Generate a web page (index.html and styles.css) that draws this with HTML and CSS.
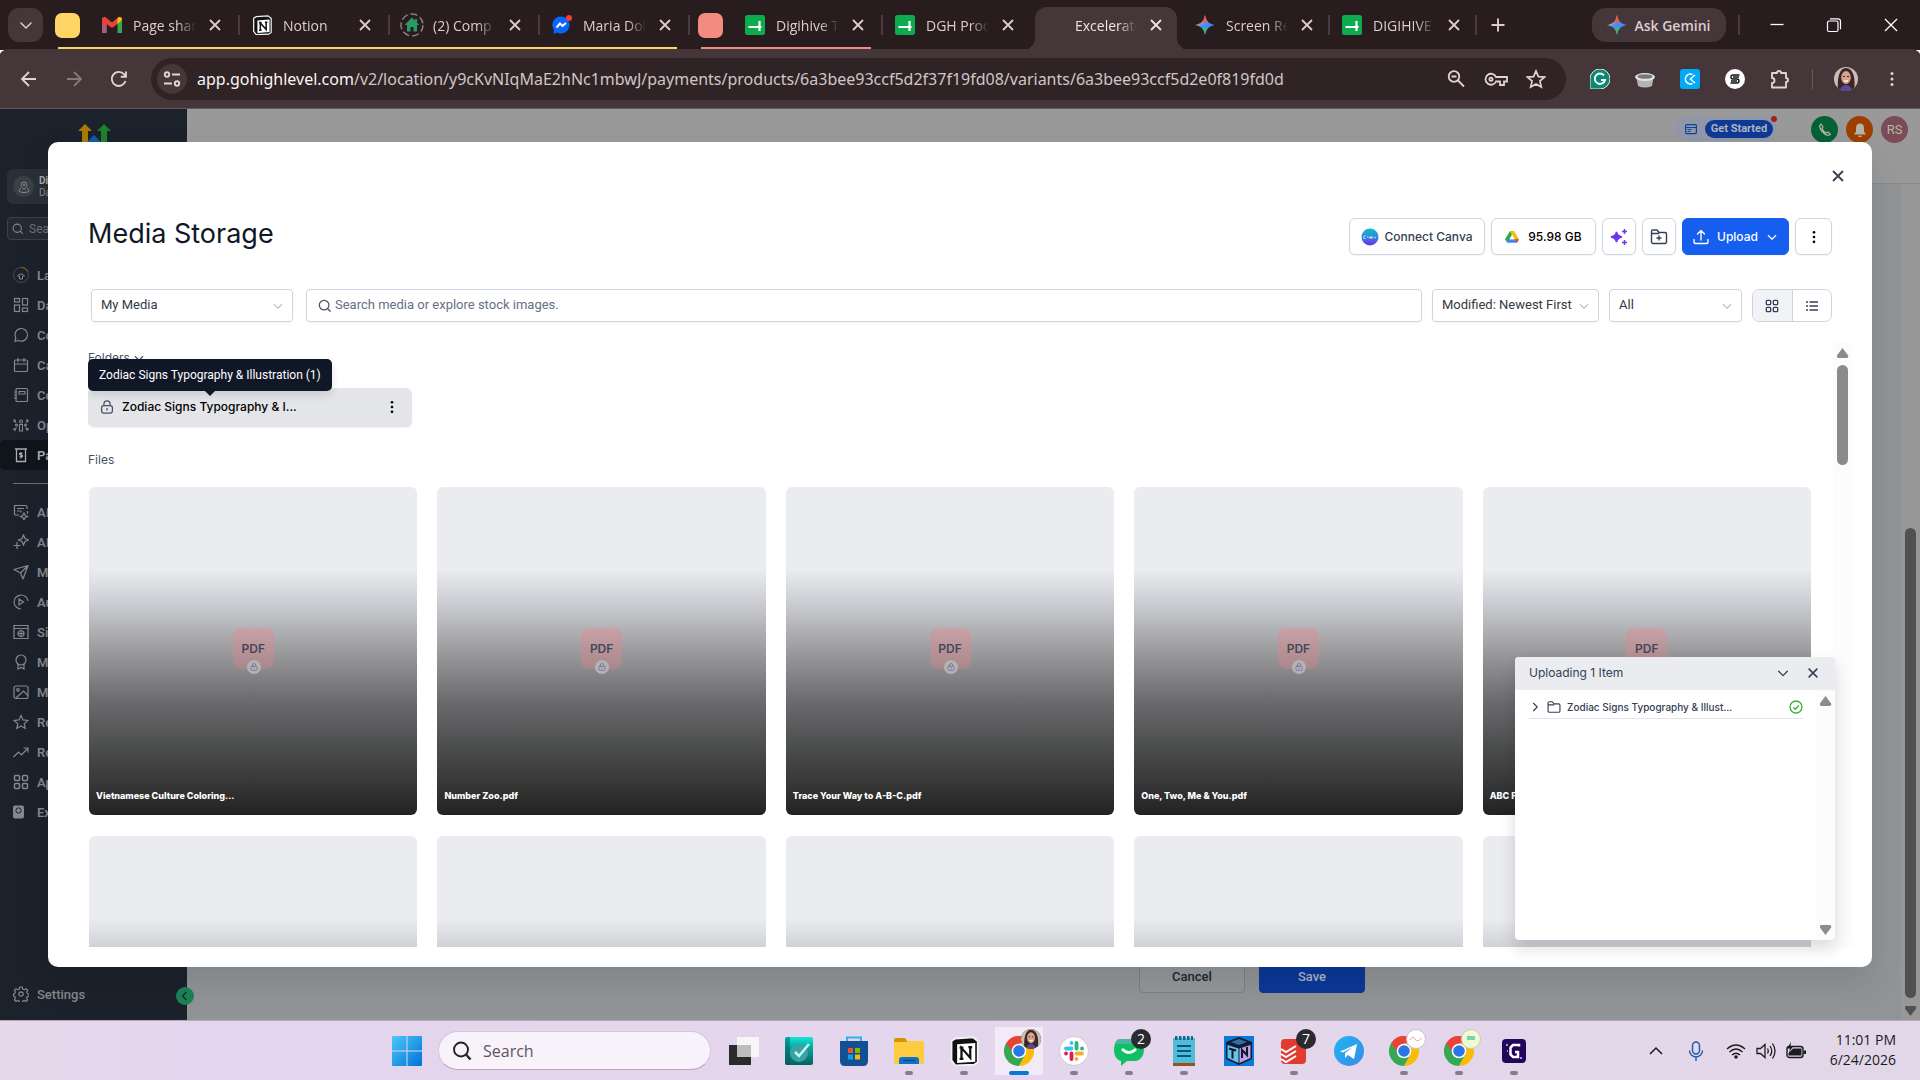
FILE: index.html
```html
<!DOCTYPE html>
<html lang="en">
<head>
<meta charset="utf-8">
<title>Excelerator</title>
<link rel="stylesheet" href="styles.css">
</head>
<body>
<svg class="defs" aria-hidden="true">
  <defs>
    <linearGradient id="gem" x1="0" y1="0" x2="1" y2="1"><stop offset="0.2" stop-color="#f5b73c"/><stop offset="0.45" stop-color="#4b8df8"/><stop offset="1" stop-color="#2e7df6"/></linearGradient>
    <linearGradient id="win" x1="0" y1="0" x2="1" y2="1"><stop offset="0" stop-color="#4cc8fb"/><stop offset="1" stop-color="#0072d4"/></linearGradient>
    <linearGradient id="canva" x1="0" y1="0" x2="0" y2="1"><stop offset="0" stop-color="#05c0cb"/><stop offset="0.5" stop-color="#3489dc"/><stop offset="1" stop-color="#7325f0"/></linearGradient>
    <linearGradient id="sec" x1="0" y1="0" x2="0" y2="1"><stop offset="0" stop-color="#0de8d8"/><stop offset="0.4" stop-color="#07a39b"/><stop offset="1" stop-color="#05625f"/></linearGradient>
    <linearGradient id="tg" x1="0" y1="0" x2="1" y2="1"><stop offset="0" stop-color="#1fb5f2"/><stop offset="1" stop-color="#3a8ae8"/></linearGradient>
  </defs>
  <symbol id="x" viewBox="0 0 16 16"><path d="M3 3l10 10M13 3L3 13" fill="none" stroke="currentColor" stroke-width="1.8"/></symbol>
  <symbol id="down" viewBox="0 0 16 16"><path d="M3 6l5 5 5-5" fill="none" stroke="currentColor" stroke-width="1.5" stroke-linecap="round" stroke-linejoin="round"/></symbol>
  <symbol id="kebab" viewBox="0 0 16 16"><g fill="currentColor"><circle cx="8" cy="2.5" r="1.5"/><circle cx="8" cy="8" r="1.5"/><circle cx="8" cy="13.5" r="1.5"/></g></symbol>
  <symbol id="lock" viewBox="0 0 16 16"><g fill="none" stroke="currentColor" stroke-width="1.4" stroke-linecap="round"><rect x="1.8" y="6.3" width="12.4" height="8.7" rx="2.6"/><path d="M4.5 6V4.5a3.5 3.5 0 0 1 7 0V6M8 9.5v2"/></g></symbol>
  <symbol id="sheets" viewBox="0 0 20 20"><rect width="20" height="20" rx="2.5" fill="#0cac4e"/><path d="M3.500 12h13M14.500 6v10" stroke="#fff" stroke-width="2.200" fill="none"/></symbol>
  <symbol id="gemini" viewBox="0 0 20 20"><path d="M10 0c1 6 4 9 10 10-6 1-9 4-10 10C9 14 6 11 0 10 6 9 9 6 10 0z" fill="url(#gem)"/><path d="M10 0c.5 3 1.500 5.200 3 6.800L10 8 7 6.800C8.500 5.200 9.500 3 10 0z" fill="#ec5a50"/><path d="M10 20c.5-3 1.500-5.200 3-6.800L10 12l-3 1.200c1.500 1.600 2.500 3.800 3 6.800z" fill="#3cb371"/></symbol>
  <symbol id="folder" viewBox="0 0 16 16"><path d="M1.200 12.500v-9A1.500 1.500 0 0 1 2.700 2H6l2 2.400h5.300a1.500 1.500 0 0 1 1.500 1.500v6.600a1.500 1.500 0 0 1-1.500 1.500H2.700a1.500 1.500 0 0 1-1.500-1.500zM1.200 5.500h7" fill="none" stroke="currentColor" stroke-width="1.300" stroke-linejoin="round"/></symbol>
  <symbol id="grid" viewBox="0 0 16 16"><g fill="none" stroke="currentColor" stroke-width="1.500"><rect x="1.500" y="1.500" width="5" height="5" rx="1"/><rect x="9.500" y="1.500" width="5" height="5" rx="1"/><rect x="1.500" y="9.500" width="5" height="5" rx="1"/><rect x="9.500" y="9.500" width="5" height="5" rx="1"/></g></symbol>
  <symbol id="search" viewBox="0 0 16 16"><g fill="none" stroke="currentColor" stroke-width="1.400" stroke-linecap="round"><circle cx="7" cy="7" r="5.500"/><path d="M11.200 11.200L14 14"/></g></symbol>
  <symbol id="chrome" viewBox="0 0 30 30"><path d="M2 7.500A15 15 0 0 1 28 7.500H15z" fill="#ea4335"/><path d="M2 7.500A15 15 0 0 0 15 30l6.500-11.200L15 15z" fill="#34a853"/><path d="M15 30A15 15 0 0 0 28 7.500H15l6.500 11.300z" fill="#fbbc05"/><path d="M2 7.500L8.500 18.800 15 15V7.500z" fill="#34a853"/><path d="M2 7.500Q8 0 15 0V15H8z" fill="#ea4335"/><circle cx="15" cy="15" r="7.300" fill="#fff"/><circle cx="15" cy="15" r="5.800" fill="#2b76e5"/></symbol>
  <symbol id="face" viewBox="0 0 24 24"><clipPath id="fc"><circle cx="12" cy="12" r="12"/></clipPath><g clip-path="url(#fc)"><rect width="24" height="24" fill="#cbbdb6"/><path d="M4 24C3 12 5 1 12 1s10 10 8 23z" fill="#3d2627"/><ellipse cx="12" cy="10.500" rx="4.800" ry="6.500" fill="#d9a38d"/><path d="M6 24c0-4 4-6 6-6s6 2 6 6z" fill="#5a4a96"/><path d="M10 13.500q2 1.500 4 0" stroke="#fff" stroke-width="1.200" fill="none"/><path d="M9 9.500h2M13 9.500h2" stroke="#3d2627"/></g></symbol>
  <symbol id="n" viewBox="0 0 24 24"><path d="M2 4l3-2 14-1 4 3v17l-3 2-15 .5-3-4z" fill="#111" stroke="#f2f2f2" stroke-width="1.500"/><path d="M6.500 6.500L21 5.500v15l-14.500 1z" fill="#fff"/><path d="M10 18V9.500l7 8V8.500M8.500 9.300h3M15.500 8.800h3M8.500 18.300h3" fill="none" stroke="#111" stroke-width="1.800"/></symbol>
</svg>

<header class="tabstrip">
  <button class="tab-search" aria-label="Search tabs"><svg class="i16"><use href="#down"/></svg></button>
  <button class="group yellow" aria-label="Tab group"></button>
  <nav class="tabs tabs-yellow">
    <div class="tab"><svg class="i20" viewBox="0 0 20 20"><path d="M0 3.500V18h4.500V8z" fill="#4285f4"/><path d="M0 3.500Q1.500.5 4 2.500l6 5 6-5q3-2 4 1.500L15.500 9 10 13 4.500 9v9H0z" fill="#ea4335"/><path d="M15.500 18V5L20 3.500V18z" fill="#34a853"/><path d="M15.500 3l2-1q2.500 0 2.500 3l-4.500 4z" fill="#fbbc04"/><path d="M0 9l4.500 1v8H1q-1 0-1-1z" fill="#4285f4" opacity=".35"/></svg><a href="#">Page shar</a><button aria-label="Close tab"><svg class="i16"><use href="#x"/></svg></button></div>
    <div class="tab"><svg class="i20"><use href="#n"/></svg><a href="#">Notion</a><button aria-label="Close tab"><svg class="i16"><use href="#x"/></svg></button></div>
    <div class="tab big"><svg class="i24" viewBox="0 0 24 24"><circle cx="12" cy="12" r="11" fill="none" stroke="#8b7f81" stroke-width="1.500" stroke-dasharray="7 3"/><path d="M12 4.500L4.500 12H7v6.500h3.500V14h3v4.500H17V12h2.500L17 9.500V6h-2v1.500z" fill="#279b62"/></svg><a href="#">(2) Comp</a><button aria-label="Close tab"><svg class="i16"><use href="#x"/></svg></button></div>
    <div class="tab"><svg class="i20" viewBox="0 0 20 20"><path d="M9 1.500a8.500 8.500 0 1 1-4 16L1.500 19l.5-4A8.500 8.500 0 0 1 9 1.500z" fill="#0866ff"/><path d="M4.500 12.500L8 8.500l2.500 2.500L14 8" fill="none" stroke="#fff" stroke-width="2"/><circle cx="17" cy="3" r="3" fill="#fb3b30"/></svg><a href="#">Maria Dol</a><button aria-label="Close tab"><svg class="i16"><use href="#x"/></svg></button></div>
  </nav>
  <button class="group pink" aria-label="Tab group"></button>
  <nav class="tabs tabs-pink">
    <div class="tab"><svg class="i20"><use href="#sheets"/></svg><a href="#">Digihive Te</a><button aria-label="Close tab"><svg class="i16"><use href="#x"/></svg></button></div>
    <div class="tab plain"><svg class="i20"><use href="#sheets"/></svg><a href="#">DGH Proc</a><button aria-label="Close tab"><svg class="i16"><use href="#x"/></svg></button></div>
  </nav>
  <nav class="tabs tabs-loose">
    <div class="tab active"><a href="#">Excelerato</a><button aria-label="Close tab"><svg class="i16"><use href="#x"/></svg></button></div>
    <div class="tab"><svg class="i20"><use href="#gemini"/></svg><a href="#">Screen Re</a><button aria-label="Close tab"><svg class="i16"><use href="#x"/></svg></button></div>
    <div class="tab"><svg class="i20"><use href="#sheets"/></svg><a href="#">DIGIHIVE</a><button aria-label="Close tab"><svg class="i16"><use href="#x"/></svg></button></div>
  </nav>
  <button class="new-tab" aria-label="New tab"><svg class="i16" viewBox="0 0 16 16"><path d="M8 1.500v13M1.500 8h13" stroke="currentColor" stroke-width="1.900"/></svg></button>
  <button class="ask"><svg class="i20"><use href="#gemini"/></svg>Ask Gemini</button>
  <div class="win-controls">
    <button aria-label="Minimize"><svg class="i16" viewBox="0 0 16 16"><path d="M1.500 7.500h13" stroke="currentColor" stroke-width="1.300"/></svg></button>
    <button aria-label="Restore"><svg class="i16" viewBox="0 0 16 16"><g fill="none" stroke="currentColor" stroke-width="1.200"><rect x="1.500" y="4" width="10.500" height="10.500" rx="1.500"/><path d="M4 1.800h8a2.500 2.500 0 0 1 2.500 2.500v8"/></g></svg></button>
    <button aria-label="Close window"><svg class="i16" viewBox="0 0 16 16"><path d="M2 2l12 12M14 2L2 14" stroke="currentColor" stroke-width="1.300"/></svg></button>
  </div>
</header>

<div class="toolbar">
  <button aria-label="Back"><svg class="i20" viewBox="0 0 20 20"><path d="M17 10H3M10 3l-7 7 7 7" fill="none" stroke="currentColor" stroke-width="1.800"/></svg></button>
  <button class="faded" aria-label="Forward"><svg class="i20" viewBox="0 0 20 20"><path d="M3 10h14M10 3l7 7-7 7" fill="none" stroke="currentColor" stroke-width="1.800"/></svg></button>
  <button aria-label="Reload"><svg class="i20" viewBox="0 0 20 20"><path d="M16.500 12A7 7 0 1 1 15 5.200L17 7.500M17 2.500v5.200h-5.200" fill="none" stroke="currentColor" stroke-width="1.900"/></svg></button>
  <div class="omnibox">
    <button class="site" aria-label="Site information"><svg class="i20" viewBox="0 0 20 20"><g fill="none" stroke="currentColor" stroke-width="1.900"><circle cx="5" cy="5.500" r="2.200"/><path d="M10 5.500h8M2 14.500h8"/><circle cx="15" cy="14.500" r="2.200"/></g></svg></button>
    <p class="url"><b>app.gohighlevel.com</b>/v2/location/y9cKvNIqMaE2hNc1mbwJ/payments/products/6a3bee93ccf5d2f37f19fd08/variants/6a3bee93ccf5d2e0f819fd0d</p>
    <div class="omni-actions">
      <button aria-label="Zoom"><svg class="i20" viewBox="0 0 20 20"><g fill="none" stroke="currentColor" stroke-width="1.800"><circle cx="8" cy="7.500" r="5.300"/><path d="M12 11.500l6 6M5.500 7.500h5"/></g></svg></button>
      <button aria-label="Passwords"><svg class="i24" viewBox="0 0 24 20"><g fill="none" stroke="currentColor" stroke-width="1.800"><path d="M12 8a5.500 5.500 0 1 0 0 4.500h4V16h4v-3.500h3V8z"/><circle cx="7" cy="10.200" r="1.600"/></g></svg></button>
      <button aria-label="Bookmark"><svg class="i20" viewBox="0 0 20 20"><path d="M10 2l2.400 5.600 6.100.5-4.600 4 1.400 6L10 14.900l-5.300 3.200 1.400-6-4.600-4 6.100-.5z" fill="none" stroke="currentColor" stroke-width="1.700"/></svg></button>
    </div>
  </div>
  <div class="extensions">
    <button aria-label="Grammarly"><svg class="i20" viewBox="0 0 20 20"><path d="M0 20V10A10 10 0 1 1 10 20z" fill="#0b8a70" stroke="#dfe9e5" stroke-width="1"/><path d="M14 6.500A5.200 5.200 0 1 0 15 11h-4" fill="none" stroke="#fff" stroke-width="1.900"/></svg></button>
    <button aria-label="Storage"><svg class="i20" viewBox="0 0 20 20"><path d="M1.500 9h17l-1.500 8q-7 3-14 0z" fill="#b4b4b4"/><ellipse cx="10" cy="8" rx="10" ry="4" fill="#e4e4e4"/><ellipse cx="10" cy="7.500" rx="7.500" ry="2.300" fill="#777"/></svg></button>
    <button aria-label="Clockify"><svg class="i20" viewBox="0 0 20 20"><rect width="20" height="20" rx="3" fill="#03a9f4"/><path d="M12.500 5.500a5 5 0 1 0 0 9M15 6l-4.500 4L15 14" fill="none" stroke="#fff" stroke-width="1.500"/></svg></button>
    <button aria-label="Scribe"><svg class="i20" viewBox="0 0 20 20"><circle cx="10" cy="10" r="10" fill="#fff"/><path d="M14.500 6H8a2 2 0 0 0 0 4h4a2 2 0 0 1 0 4H5.500M8 8h6M6 12h6" fill="none" stroke="#111" stroke-width="1.400"/></svg></button>
    <button aria-label="Extensions"><svg class="i20" viewBox="0 0 20 20"><path d="M2 4h5a2 2 0 0 1 4 0h5v5a2 2 0 0 1 0 4v5.500H2V14a2.500 2.500 0 0 0 0-5z" fill="none" stroke="currentColor" stroke-width="1.900" stroke-linejoin="round"/></svg></button>
  </div>
  <button class="profile" aria-label="Profile"><svg class="i24"><use href="#face"/></svg></button>
  <button aria-label="Menu"><svg class="i16"><use href="#kebab"/></svg></button>
</div>

<main class="page">
  <aside class="sidebar">
    <svg class="logo" viewBox="0 0 34 30"><path d="M5 30V7H1L8 0l7 7h-4v23z" fill="#a87b05"/><path d="M24 30V7h-4l7-7 7 7h-4v23z" fill="#1e8227"/><path d="M10 18l7-7 7 7v12H10z" fill="#115aa3"/></svg>
    <button class="location"><span class="pin"><svg class="i12" viewBox="0 0 12 12"><g fill="none" stroke="currentColor"><path d="M6 8.500C4 6.500 3.200 5.200 3.200 3.800a2.800 2.800 0 0 1 5.600 0C8.800 5.200 8 6.500 6 8.500z"/><circle cx="6" cy="3.800" r=".8"/><path d="M3 7.500C-1 9 1 11.500 6 11.500S13 9 9 7.500"/></g></svg></span><span><b>Di</b><i>Da</i></span></button>
    <label class="side-search"><svg class="i12"><use href="#search"/></svg><input type="text" placeholder="Sea"></label>
    <nav class="side-nav">
      <a href="#"><svg class="i16" viewBox="0 0 16 16"><g fill="none" stroke="currentColor"><circle cx="8" cy="8" r="7.500" opacity=".4"/><path d="M8 .5A7.500 7.500 0 0 1 15 5" stroke="#a45b19"/><path d="M6.500 12V9H4.500a4 4 0 0 1 7 0h-2v3z"/></g></svg>La</a>
      <a href="#"><svg class="i16" viewBox="0 0 16 16"><g fill="none" stroke="currentColor" stroke-width="1.200"><rect x="1.500" y="1.500" width="5" height="3.500"/><rect x="9.500" y="1.500" width="5" height="6.500"/><rect x="1.500" y="8" width="5" height="6.500"/><rect x="9.500" y="11" width="5" height="3.500"/></g></svg>Da</a>
      <a href="#"><svg class="i16" viewBox="0 0 16 16"><path d="M2 14.500l.8-3.500A6.300 6.300 0 1 1 5.500 13.500z" fill="none" stroke="currentColor" stroke-width="1.200"/></svg>Co</a>
      <a href="#"><svg class="i16" viewBox="0 0 16 16"><g fill="none" stroke="currentColor" stroke-width="1.200"><rect x="1.500" y="3" width="13" height="11.500" rx="1"/><path d="M1.500 7h13M5 1v4M11 1v4"/></g></svg>Ca</a>
      <a href="#"><svg class="i16" viewBox="0 0 16 16"><g fill="none" stroke="currentColor" stroke-width="1.200"><rect x="3" y="1.500" width="11.500" height="13" rx="1"/><path d="M6 4.500h6v2.500H6zM1 5h3M1 8h3M1 11h3"/></g></svg>Co</a>
      <a href="#"><svg class="i16" viewBox="0 0 16 16"><g fill="none" stroke="currentColor" stroke-width="1.100"><circle cx="8" cy="4.500" r="1.500"/><path d="M6.500 14V7.500h3V14zM1 5V3h2M3 5.500L1 3.500M15 5V3h-2M1 11v2h2M15 11v2h-2M13 5.500l2-2M3.500 10.500L1.500 13M12.500 10.500L15 13"/><circle cx="3.500" cy="8" r="1"/><circle cx="12.500" cy="8" r="1"/></g></svg>Op</a>
      <a href="#" class="current"><svg class="i16" viewBox="0 0 16 16"><g fill="none" stroke="currentColor" stroke-width="1.300"><path d="M2 2h12M3.500 2v12.500h9V2M9.500 6.500q-3-1-3 .8 3 .5 3 1.700-.5 1.500-3 .7M8 5.200v6.300"/></g></svg>Pa</a>
      <hr>
      <a href="#"><svg class="i16" viewBox="0 0 16 16"><g fill="none" stroke="currentColor" stroke-width="1.200"><path d="M14 5V3a1.500 1.500 0 0 0-1.500-1.500h-11v8.500a1 1 0 0 0 1 1H6M4 4.500h7M4 7h3M11 9l1.200 2.500 2.300 1-2.300 1L11 16l-1.200-2.500-2.300-1 2.300-1zM8 6.500v2M14.500 7v3"/></g></svg>AI</a>
      <a href="#"><svg class="i16" viewBox="0 0 16 16"><path d="M10.500 1L12 4.500 15.500 6 12 7.500 10.500 11 9 7.500 5.500 6 9 4.500zM4 8v7M.5 11.500h7" fill="none" stroke="currentColor" stroke-width="1.200"/></svg>AI</a>
      <a href="#"><svg class="i16" viewBox="0 0 16 16"><path d="M1 5.500L15 1.500 10 15 7.500 9zM7.500 9L15 1.500" fill="none" stroke="currentColor" stroke-width="1.200" stroke-linejoin="round"/></svg>Ma</a>
      <a href="#"><svg class="i16" viewBox="0 0 16 16"><path d="M15 7a7 7 0 1 0-7 8M6 5l4.500 3L6 11z" fill="none" stroke="currentColor" stroke-width="1.200"/></svg>Au</a>
      <a href="#"><svg class="i16" viewBox="0 0 16 16"><g fill="none" stroke="currentColor" stroke-width="1.200"><path d="M1 1.500h14v13H1zM1 4.500h14"/><circle cx="8" cy="9.500" r="3"/><path d="M5 9.500h6M8 6.500v6"/></g></svg>Sit</a>
      <a href="#"><svg class="i16" viewBox="0 0 16 16"><g fill="none" stroke="currentColor" stroke-width="1.200"><circle cx="8" cy="6" r="5"/><path d="M5 10v5l3-1.500 3 1.500v-5"/></g></svg>Me</a>
      <a href="#"><svg class="i16" viewBox="0 0 16 16"><g fill="none" stroke="currentColor" stroke-width="1.200"><rect x="1" y="2" width="14" height="12.500" rx="2"/><circle cx="5" cy="5.800" r="1.300"/><path d="M3 14l7.500-7 4.500 4.500"/></g></svg>Me</a>
      <a href="#"><svg class="i16" viewBox="0 0 16 16"><path d="M8 1.500l2 4.400 4.800.5-3.600 3.200 1 4.800L8 12l-4.200 2.400 1-4.800L1.200 6.400 6 5.900z" fill="none" stroke="currentColor" stroke-width="1.200"/></svg>Re</a>
      <a href="#"><svg class="i16" viewBox="0 0 16 16"><path d="M.5 13l5-5 3 3L15 4M10.500 4H15v4.500" fill="none" stroke="currentColor" stroke-width="1.200"/></svg>Re</a>
      <a href="#"><svg class="i16"><use href="#grid"/></svg>Ap</a>
      <a href="#"><svg class="i16" viewBox="0 0 16 16"><rect x="0" y="1.500" width="11" height="13" rx="2" fill="currentColor"/><circle cx="5.500" cy="6.500" r="2.600" fill="none" stroke="#1b222c"/></svg>Ex</a>
    </nav>
    <a href="#" class="settings"><svg class="i16" viewBox="0 0 16 16"><g fill="none" stroke="currentColor" stroke-width="1.200"><circle cx="8" cy="8" r="2.200"/><path d="M6.800 1h2.400l.5 2 1.600.7 1.800-1 1.600 1.700-1 1.700.6 1.500 1.800.5v2l-1.900.6-.6 1.500 1 1.700-1.600 1.600-1.700-1-1.600.6-.5 1.900H6.800l-.5-1.900-1.600-.6-1.700 1-1.600-1.600 1-1.700-.6-1.500-1.300-.6v-2l1.300-.5.6-1.500-1-1.700L3 2.700l1.700 1L6.300 3z"/></g></svg>Settings</a>
    <button class="collapse" aria-label="Collapse sidebar"><svg class="i12" viewBox="0 0 12 12"><path d="M7.500 2l-4 4 4 4" fill="none" stroke="currentColor" stroke-width="1.300"/></svg></button>
  </aside>

  <section class="backdrop">
    <div class="app-header">
      <div class="started"><svg class="i12" viewBox="0 0 12 12"><g fill="none" stroke="currentColor" stroke-width="1.200"><rect x=".6" y="1.600" width="10.800" height="9" rx="1"/><path d="M.6 4.500h10.800M2.500 6.500h4M2.500 8.500h3"/></g></svg><button>Get Started</button></div>
      <button class="round green" aria-label="Phone"><svg class="i16" viewBox="0 0 16 16"><path d="M4 2L2.500 4Q4 11 11 13.500L13.500 12.500 11 10 9.500 11Q6 9.500 5 6.500L6 5z" fill="none" stroke="currentColor" stroke-width="1.200" stroke-linejoin="round"/></svg></button>
      <button class="round orange" aria-label="Notifications"><svg class="i16" viewBox="0 0 16 16"><path d="M8 1.500q4 0 4 5v3l2 3H2l2-3v-3q0-5 4-5zM6.500 13.500h3v1.500h-3z" fill="currentColor"/></svg></button>
      <button class="round rose">RS</button>
    </div>
    <div class="form-actions"><button>Cancel</button><button class="save">Save</button></div>
  </section>
  <div class="page-scroll"><span class="page-thumb"></span><span class="arrow down"></span></div>

  <section class="modal" role="dialog" aria-label="Media Storage">
    <div class="modal-top"><button class="icon-only" aria-label="Close"><svg class="i16"><use href="#x"/></svg></button></div>
    <div class="modal-head">
      <h1>Media Storage</h1>
      <div class="actions">
        <button class="btn canva"><svg class="i18" viewBox="0 0 18 18"><circle cx="9" cy="9" r="8.500" fill="url(#canva)"/><path d="M4.500 8q-2 0-2 1.500t2 1M6 9.500q1-1.500 1.500 0M9 10.500v-2l1 2 1-2 .5 2M13 9q1 1.500 2 .5" fill="none" stroke="#dff" stroke-width=".8"/></svg>Connect Canva</button>
        <button class="btn drive"><svg class="i14" viewBox="0 0 16 16"><path d="M5.500 1.500h5L5 11l-2.500 3.500L0 10.500z" fill="#34a853"/><path d="M5.500 1.500h5L16 10.500h-5z" fill="#fbbc04"/><path d="M3 10.500h13L13.500 14.500h-11z" fill="#4285f4"/><path d="M11 10.500h5l-2.500 4z" fill="#ea4335"/><path d="M8 5.500l-2.800 5h5.600z" fill="#fff"/></svg>95.98 GB</button>
        <button class="btn square ai" aria-label="Generate with AI"><svg class="i18" viewBox="0 0 18 18"><path d="M6.500 4q.8 4.200 5.500 5-4.700.8-5.500 5Q5.700 9.800 1 9q4.700-.8 5.500-5zM14.500 1v5M12 3.500h5M14.500 12v5M12 14.500h5" fill="currentColor" stroke="currentColor" stroke-width="1.500"/></svg></button>
        <button class="btn square" aria-label="New folder"><svg class="i18" viewBox="0 0 18 18"><path d="M1.500 14V3.500A1.500 1.500 0 0 1 3 2h4l2 2.500h6A1.500 1.500 0 0 1 16.500 6v8a1.500 1.500 0 0 1-1.500 1.500H3A1.500 1.500 0 0 1 1.500 14zM1.500 5.500H9M9 7.500v5M6.500 10h5" fill="none" stroke="currentColor" stroke-width="1.400"/></svg></button>
        <button class="btn upload"><svg class="i16" viewBox="0 0 16 16"><path d="M8 11V1.500M4.500 5L8 1.500 11.500 5M1 10.500v2.500q0 1.500 1.500 1.500h11Q15 14.500 15 13v-2.500" fill="none" stroke="currentColor" stroke-width="1.400" stroke-linecap="round" stroke-linejoin="round"/></svg>Upload<svg class="i12"><use href="#down"/></svg></button>
        <button class="btn more" aria-label="More"><svg class="i14"><use href="#kebab"/></svg></button>
      </div>
    </div>
    <div class="filters">
      <div class="select source"><select aria-label="Source"><option>My Media</option></select><svg class="i12"><use href="#down"/></svg></div>
      <label class="search"><svg class="i14"><use href="#search"/></svg><input type="text" placeholder="Search media or explore stock images."></label>
      <div class="select sort"><select aria-label="Sort"><option>Modified: Newest First</option></select><svg class="i12"><use href="#down"/></svg></div>
      <div class="select type"><select aria-label="Type"><option>All</option></select><svg class="i12"><use href="#down"/></svg></div>
      <div class="views"><button class="on" aria-label="Grid view"><svg class="i14"><use href="#grid"/></svg></button><button aria-label="List view"><svg class="i12" viewBox="0 0 12 12"><path d="M3.500 2H12M3.500 6H12M3.500 10H12M0 2h2M0 6h2M0 10h2" stroke="currentColor" stroke-width="1.300"/></svg></button></div>
    </div>
    <div class="scroll">
      <div class="content">
        <h2>Folders <svg class="i12"><use href="#down"/></svg></h2>
        <div class="folder"><svg class="i14"><use href="#lock"/></svg><span>Zodiac Signs Typography &amp; I...</span><button class="icon-only" aria-label="Folder menu"><svg class="i14"><use href="#kebab"/></svg></button>
          <div class="tooltip" role="tooltip">Zodiac Signs Typography &amp; Illustration (1)</div></div>
        <h2>Files</h2>
        <div class="cards">
          <article class="card"><span class="pdf">PDF<i><svg class="i8"><use href="#lock"/></svg></i></span><h3>Vietnamese Culture Coloring...</h3></article>
          <article class="card"><span class="pdf">PDF<i><svg class="i8"><use href="#lock"/></svg></i></span><h3>Number Zoo.pdf</h3></article>
          <article class="card"><span class="pdf">PDF<i><svg class="i8"><use href="#lock"/></svg></i></span><h3>Trace Your Way to A-B-C.pdf</h3></article>
          <article class="card"><span class="pdf">PDF<i><svg class="i8"><use href="#lock"/></svg></i></span><h3>One, Two, Me &amp; You.pdf</h3></article>
          <article class="card"><span class="pdf">PDF</span><h3>ABC F</h3></article>
          <article class="card"></article><article class="card"></article><article class="card"></article><article class="card"></article><article class="card"></article>
        </div>
      </div>
      <div class="track"><span class="arrow up"></span><span class="thumb"></span></div>
    </div>
    <section class="uploads">
      <header><h2>Uploading 1 Item</h2><button class="icon-only" aria-label="Minimize uploads"><svg class="i14"><use href="#down"/></svg></button><button class="icon-only" aria-label="Close uploads"><svg class="i14"><use href="#x"/></svg></button></header>
      <div class="upload-body">
        <div class="upload-list"><div class="upload-row"><svg class="i12 turn"><use href="#down"/></svg><svg class="i14"><use href="#folder"/></svg><span>Zodiac Signs Typography &amp; Illust...</span><svg class="i14 ok" viewBox="0 0 14 14"><g fill="none" stroke="currentColor" stroke-width="1.300"><circle cx="7" cy="7" r="6"/><path d="M4.300 7.200l2 2 3.500-3.700"/></g></svg></div></div>
        <div class="track"><span class="arrow up"></span><span class="arrow down"></span></div>
      </div>
    </section>
  </section>
</main>

<footer class="taskbar">
  <div class="start-area">
    <button class="start" aria-label="Start"><svg class="i30" viewBox="0 0 30 30"><path d="M0 1q0-1 1-1h13.500v14.500H0zM15.500 0H29q1 0 1 1v13.500H15.500zM0 15.500h14.500V30H1q-1 0-1-1zM15.500 15.500H30V29q0 1-1 1H15.500z" fill="url(#win)"/></svg></button>
    <label class="task-search"><svg class="i20" viewBox="0 0 20 20"><circle cx="9" cy="8.500" r="7" fill="none" stroke="#222" stroke-width="1.900"/><path d="M14 13.500l4.500 5" stroke="#222" stroke-width="2.300"/></svg><input type="text" placeholder="Search"></label>
  </div>
  <nav class="apps">
    <button aria-label="Task view"><svg class="i30" viewBox="0 0 30 30"><rect x="0" y="9" width="22" height="20" fill="#2b2b2b"/><rect x="8" y="1" width="22" height="20" fill="#f6f6f6"/><rect x="8" y="9" width="14" height="12" fill="#bdbdbd"/></svg></button>
    <button aria-label="Security"><svg class="i30" viewBox="0 0 30 30"><rect x="1" y="1" width="28" height="28" rx="2" fill="url(#sec)"/><path d="M1 3q0-2 2-2h3v28H3q-2 0-2-2z" fill="#055" opacity=".45"/><circle cx="15" cy="17" r="9" fill="#3aa3a3"/><path d="M11 16l4 4 10-12" fill="none" stroke="#c6f6f6" stroke-width="2.500"/></svg></button>
    <button aria-label="Store"><svg class="i30" viewBox="0 0 30 30"><path d="M8 6V1.500h14V6" fill="none" stroke="#28b4ee" stroke-width="2"/><path d="M1 5h28v20q0 5-5 5H6q-5 0-5-5z" fill="#124f93"/><path d="M9 12h5v5H9z" fill="#f25022"/><path d="M16 12h5v5h-5z" fill="#7fba00"/><path d="M9 18.500h5v5H9z" fill="#00a4ef"/><path d="M16 18.500h5v5h-5z" fill="#ffb900"/></svg></button>
    <button aria-label="Files" class="run"><svg class="i30" viewBox="0 0 30 30"><path d="M0 4q0-2 2-2h9l3 4H0z" fill="#d99300"/><path d="M0 6l12 0 3-1h13q2 0 2 2v19q0 2-2 2H0z" fill="#fdcb3e"/><path d="M5 28v-4q0-3 3-3h14q3 0 3 3v4z" fill="#0f71c9"/><path d="M9 24.500h12" stroke="#0a4c8c" stroke-width="1.500"/></svg></button>
    <button aria-label="Notion" class="run"><svg class="i30"><use href="#n"/></svg></button>
    <button aria-label="Chrome" class="run focused"><svg class="i30"><use href="#chrome"/></svg><span class="badge"><svg class="i20"><use href="#face"/></svg></span></button>
    <button aria-label="Slack" class="run"><svg class="i30" viewBox="0 0 30 30"><circle cx="15" cy="15" r="14.500" fill="#fff" stroke="#ccc"/><g fill="none" stroke-width="3.800" stroke-linecap="round"><path d="M7 12.500h5.500M12.500 7v.1" stroke="#36c5f0"/><path d="M17.500 7v5.500M23 12.500h.1" stroke="#2eb67d"/><path d="M17.500 17.500H23M17.500 23v.1" stroke="#ecb22e"/><path d="M12.500 17.500V23M7 17.500h.1" stroke="#e01e5a"/></g></svg></button>
    <button aria-label="Chat" class="run"><svg class="i30" viewBox="0 0 30 30"><path d="M6 3h18q6 0 6 10t-8 12H13l-6 5v-5Q0 23 0 14T6 3z" fill="#0fc163"/><path d="M6 3h18q4 0 5 5H1q1-5 5-5z" fill="#4cb6a0"/><path d="M8 13q7 7 14 0" fill="none" stroke="#fff" stroke-width="2.500"/></svg><span class="badge">2</span></button>
    <button aria-label="Notepad" class="run"><svg class="i30" viewBox="0 0 30 30"><path d="M4 26h22v4H4z" fill="#995019"/><path d="M4 2h22v25H4z" fill="#50bcd9"/><path d="M6 2h18" stroke="#116989" stroke-width="4" stroke-dasharray="2.500 1.500"/><path d="M8 10h14M8 15h14M8 20h14" stroke="#075878" stroke-width="2"/></svg></button>
    <button aria-label="Notion text"><svg class="i30" viewBox="0 0 30 30"><rect width="30" height="30" fill="#0a79d7"/><path d="M15 1l13 5v17L15 29 2 23V6z" fill="#111d34"/><path d="M3.500 9L14.500 12.500V27L3.500 22z" fill="#62c4e9"/><path d="M26.500 9l-11 3.500V27l11-5z" fill="#b9a0e8"/><path d="M5 12.500l7 2M8.500 13.500v9M18 22v-8l5 5v-8" fill="none" stroke="#101729" stroke-width="2"/><path d="M7 6l8-3 8 3-8 3z" fill="#3a6ea0"/></svg></button>
    <button aria-label="Todoist" class="run"><svg class="i30" viewBox="0 0 30 30"><rect x="2" y="3" width="25" height="25" rx="4" fill="#e13c30"/><path d="M2 13l5 3 10-6M2 18l5 3 10-6M2 23l5 3 10-6" fill="none" stroke="#fff" stroke-width="2"/></svg><span class="badge">7</span></button>
    <button aria-label="Telegram"><svg class="i30" viewBox="0 0 30 30"><circle cx="15" cy="15" r="15" fill="url(#tg)"/><path d="M6 15.500L23 8l-3 15-6-4-3 3v-5l8-6-10 5.500z" fill="#fff"/></svg></button>
    <button aria-label="Chrome profile 2" class="run"><svg class="i30"><use href="#chrome"/></svg><span class="badge pale"><svg class="i16" viewBox="0 0 16 16"><path d="M2 9q3-5 5-1t7-1" stroke="#eba3bf" fill="none"/></svg></span></button>
    <button aria-label="Chrome profile 3" class="run"><svg class="i30"><use href="#chrome"/></svg><span class="badge lime"><svg class="i16" viewBox="0 0 16 16"><path d="M4 5h8v4H4z" fill="#7bd0b1"/></svg></span></button>
    <button aria-label="Game" class="run"><svg class="i24" viewBox="0 0 24 24"><rect width="24" height="24" rx="4" fill="#23055c"/><path d="M17 7.500V6h-6L8.500 8.500v7L11 18h5v-5h-3" fill="none" stroke="#fff" stroke-width="2.500"/><path d="M4 5h2v2H4zM18 18h2v2h-2zM5 11h1v2H5z" fill="#a98be8"/></svg></button>
  </nav>
  <div class="tray">
    <button aria-label="Hidden icons"><svg class="i16" viewBox="0 0 16 16"><path d="M2 11l6-6 6 6" fill="none" stroke="currentColor" stroke-width="1.500"/></svg></button>
    <button class="mic" aria-label="Microphone"><svg class="i20" viewBox="0 0 20 20"><g fill="none" stroke="currentColor" stroke-width="1.400"><rect x="6.500" y="1" width="7" height="12" rx="3.500"/><path d="M3.500 9.500a6.500 6.500 0 0 0 13 0M10 16v4"/></g></svg></button>
    <button aria-label="Wi-Fi"><svg class="i20" viewBox="0 0 20 20"><g fill="none" stroke="currentColor" stroke-width="1.400"><path d="M1 8q9-8 18 0M3.500 11q6.500-6 13 0M6 14q4-3.500 8 0"/></g><circle cx="10" cy="16" r="1.800" fill="currentColor"/></svg></button>
    <button aria-label="Volume"><svg class="i20" viewBox="0 0 20 20"><path d="M1 7.500h3.500L9 3.500v13l-4.500-4H1zM11.500 7.500q1.500 2.500 0 5M14 5q3.500 5 0 10M16.500 2.500q5 7.500 0 15" fill="none" stroke="currentColor" stroke-width="1.300"/></svg></button>
    <button aria-label="Battery"><svg class="i20" viewBox="0 0 20 20"><rect x="1" y="5.500" width="16" height="11" rx="2.500" fill="none" stroke="currentColor" stroke-width="1.400"/><path d="M7 7.500h8.500v7h-13V12zM17.500 9.500H20v3.500h-2.500zM5 1L1 7.500h3L3 11l4-5.500H4.500z" fill="currentColor"/></svg></button>
    <p class="clock">11:01 PM<br>6/24/2026</p>
  </div>
</footer>
</body>
</html>
```
FILE: styles.css
```css
* { box-sizing: border-box; }
body { margin: 0; height: 100vh; display: flex; flex-direction: column; overflow: hidden; font-family: Inter, "Liberation Sans", sans-serif; font-size: 12px; color: #101828; }
button { margin: 0; padding: 0; border: 0; background: none; color: inherit; font: inherit; display: flex; align-items: center; justify-content: center; flex: none; }
a { color: inherit; text-decoration: none; }
h1, h2, h3, p { margin: 0; font-weight: 400; }
i { font-style: normal; }
input, select { font: inherit; color: inherit; border: 0; background: none; padding: 0; margin: 0; outline: 0; min-width: 0; }
svg { flex: none; display: block; }
.defs { position: absolute; width: 0; height: 0; }
.i8 { width: 8px; height: 8px; }
.i12 { width: 12px; height: 12px; }
.i14 { width: 14px; height: 14px; }
.i16 { width: 16px; height: 16px; }
.i18 { width: 18px; height: 18px; }
.i20 { width: 20px; height: 20px; }
.i24 { width: 24px; height: 24px; }
.i30 { width: 30px; height: 30px; }

/* Browser tab strip */
.tabstrip { flex: none; height: 50px; display: flex; align-items: center; background: #281c1e; color: #dccdd0; font-family: "Open Sans", sans-serif; font-size: 14px; padding-left: 8px; }
.tab-search { width: 35px; height: 34px; border-radius: 11px; background: #453639; margin-right: 12px; }
.group { width: 25px; height: 25px; border-radius: 7px; position: relative; }
.yellow { background: #ffd666; }
.pink { background: #f28b82; margin-left: 8px; }
.tabs { display: flex; align-items: center; height: 50px; }
.tabs-yellow { margin-left: -22px; padding-left: 32px; background: linear-gradient(#ffd666, #ffd666) left bottom / 619px 3px no-repeat; }
.tabs-pink { margin-left: -22px; padding-left: 32px; background: linear-gradient(#f28b82, #f28b82) left bottom / 170px 3px no-repeat; }
.tab { width: 150px; height: 34px; display: flex; align-items: center; padding: 0 17px 0 12px; position: relative; background: linear-gradient(#4b3b3e, #4b3b3e) right center / 2px 20px no-repeat; }
.tab a { flex: 1; margin-left: 11px; white-space: nowrap; overflow: hidden; min-width: 0; mask-image: linear-gradient(90deg, #000 70%, transparent); }
.tab.big { padding-left: 10px; }
.tab.big a { margin-left: 9px; }
.tab button { margin-left: 11px; }
.tab.plain { background: none; }
.tabs-loose .tab { width: 147px; padding-right: 15px; }
.tabs-loose .tab.active { background: #453639; width: 142px; height: 43px; align-self: flex-end; border-radius: 12px 12px 0 0; padding: 0 13px 7px 29px; color: #efe2e4; margin: 0 6px 0 2px; }
.active::before, .active::after { content: ""; position: absolute; bottom: 0; width: 12px; height: 12px; }
.active::before { right: 100%; background: radial-gradient(circle at 0 0, transparent 12px, #453639 12px); }
.active::after { left: 100%; background: radial-gradient(circle at 100% 0, transparent 12px, #453639 12px); }
.new-tab { width: 42px; height: 34px; }
.ask { margin-left: auto; height: 34px; width: 134px; border-radius: 14px; background: #453639; gap: 7px; font-weight: 600; }
.win-controls { display: flex; margin-left: 12px; padding-left: 10px; background: linear-gradient(#4b3b3e, #4b3b3e) left center / 2px 20px no-repeat; color: #fff; padding-right: 1px; }
.win-controls button { width: 57px; height: 34px; }

/* Browser toolbar */
.toolbar { flex: none; height: 59px; display: flex; align-items: center; background: #453639; border-bottom: 1px solid #66595b; box-shadow: 0 0 0 1px #453639; border-radius: 8px 8px 0 0; color: #e2d2d5; padding-left: 6px; }
.toolbar > button { width: 45px; height: 40px; }
.toolbar > .faded { color: #87787b; }
.omnibox { flex: 1; min-width: 0; height: 42px; margin-left: 10px; border-radius: 21px; background: #2f2325; display: flex; align-items: center; padding: 0 20px 0 6px; }
.site { width: 30px; height: 30px; border-radius: 50%; background: #453639; }
.url { flex: 1; min-width: 0; overflow: hidden; white-space: nowrap; margin-left: 10px; font-family: "Noto Sans", sans-serif; font-size: 16px; line-height: 24px; color: #cfc6c8; }
.url b { font-weight: 400; color: #fbf4f5; }
.omni-actions { display: flex; }
.omni-actions button { width: 40px; }
.omni-actions button:last-child { width: 20px; margin-left: 10px; }
.extensions { display: flex; margin-left: 11px; padding-right: 11px; background: linear-gradient(#66595b, #66595b) right center / 1px 20px no-repeat; }
.extensions button { width: 45px; height: 40px; }
.toolbar .profile { width: 66px; }
.toolbar .profile + button { width: 25px; margin-right: 16px; }

/* Dimmed application page */
.page { flex: 1; min-height: 0; position: relative; display: flex; background: #909496; }
.sidebar { width: 187px; background: #1b222c; color: #85888d; display: flex; flex-direction: column; padding-top: 15px; position: relative; font-family: Roboto, sans-serif; }
.logo { width: 34px; height: 30px; align-self: center; }
.location { height: 35px; margin: 15px 7px 13px; background: #2b3038; border-radius: 6px; justify-content: flex-start; padding: 0 6px; gap: 5px; text-align: left; font-size: 10px; line-height: 12px; }
.location b, .location i { display: block; }
.location b { color: #a5a7aa; }
.pin { width: 21px; height: 21px; border-radius: 50%; background: #3b3f46; display: grid; place-items: center; }
.side-search { height: 23px; margin: 0 7px; border: 1px solid #3b4049; border-radius: 4px; background: #252b34; display: flex; align-items: center; gap: 5px; padding: 0 4px; }
.side-search input { width: 100px; }
.side-search input::placeholder { color: #6f7379; opacity: 1; }
.side-nav { display: flex; flex-direction: column; margin-top: 20px; font-weight: 600; font-size: 13px; }
.side-nav a, .settings { height: 30px; display: flex; align-items: center; gap: 8px; padding-left: 13px; }
.side-nav .current { background: #10151c; color: #aaacb0; border-radius: 5px; }
.side-nav hr { width: 160px; height: 1px; border: 0; background: #6b6f75; margin: 13px; }
.settings { margin-top: auto; margin-bottom: 11px; font-size: 13px; font-weight: 500; }
.collapse { position: absolute; right: -7px; bottom: 15px; width: 18px; height: 18px; border-radius: 50%; background: #1c8258; color: #0b2c24; z-index: 1; }
.backdrop { flex: 1; display: flex; flex-direction: column; justify-content: space-between; }
.app-header { height: 75px; background: #999; border-bottom: 1px solid #888; display: flex; align-items: flex-start; justify-content: flex-end; padding-top: 7px; gap: 8px; margin-right: -19px; padding-right: 12px; }
.started { height: 25px; margin-right: 26px; padding: 0 4px 0 10px; gap: 8px; border-radius: 13px; background: #9098a8; color: #12429f; display: flex; align-items: center; position: relative; }
.started::after { content: ""; position: absolute; right: 0; top: 0; width: 6px; height: 6px; border-radius: 50%; background: #a3201d; }
.started button { height: 18px; width: 68px; border-radius: 9px; background: #0e3a94; color: #aeb4c0; font-size: 11px; font-weight: 700; font-family: Roboto, sans-serif; }
.round { width: 27px; height: 27px; border-radius: 50%; color: #b4b4a8; }
.green { background: #056135; }
.orange { background: #9c3f00; }
.rose { background: #7b4c57; font-size: 13px; font-family: Roboto, sans-serif; }
.form-actions { display: flex; justify-content: flex-end; gap: 14px; padding-bottom: 27px; margin-right: 536px; font-weight: 500; font-family: Roboto, sans-serif; font-size: 13px; }
.form-actions button { width: 106px; height: 33px; border: 1px solid #7b7f84; border-radius: 4px; color: #1e2633; background: #949799; }
.form-actions .save { background: #0b3897; border-color: #0b3897; color: #a9b4c9; }
.page-scroll { width: 19px; padding: 0 4px 4px; margin-top: 75px; background: #979797; display: flex; flex-direction: column; align-items: center; justify-content: flex-end; gap: 8px; color: #515151; }
.page-thumb { width: 11px; height: 470px; border-radius: 6px; background: #515151; }
.arrow { width: 12px; height: 10px; background: currentColor; flex: none; }
.up { clip-path: polygon(50% 0, 100% 80%, 90% 100%, 10% 100%, 0 80%); }
.down { clip-path: polygon(10% 0, 90% 0, 100% 20%, 50% 100%, 0 20%); }

/* Media storage dialog */
.modal { position: absolute; inset: 33px 48px 53px 48px; z-index: 2; background: #fff; border-radius: 10px; padding: 0 20px 20px 40px; display: flex; flex-direction: column; box-shadow: 0 16px 32px rgba(0, 0, 0, 0.1); }
.modal-top { flex: none; height: 76px; padding: 24px 4px 0; display: flex; justify-content: flex-end; align-items: flex-start; }
.icon-only { width: 20px; height: 20px; color: #344054; }
.modal-head { display: flex; justify-content: space-between; margin-right: 20px; height: 37px; flex: none; }
h1 { font-size: 27px; line-height: 32px; }
.actions { display: flex; gap: 6px; }
.btn { height: 37px; border: 1px solid #d0d5dd; border-radius: 6px; background: #fff; box-shadow: 0 1px 2px rgba(16, 24, 40, 0.05); font-weight: 500; gap: 7px; }
.canva { width: 136px; color: #344054; gap: 5px; }
.drive { width: 105px; color: #000; gap: 9px; }
.square { width: 34px; color: #344054; }
.ai { color: #6938ef; }
.upload { width: 107px; background: #155eef; border-color: #155eef; color: #fff; gap: 8px; }
.more { width: 37px; color: #000; }
.filters { display: flex; gap: 10px; margin: 34px 20px 20px 3px; height: 33px; flex: none; font-family: Roboto, sans-serif; font-size: 13px; }
.select, .search { border: 1px solid #d0d5dd; border-radius: 4px; box-shadow: 0 1px 2px rgba(16, 24, 40, 0.05); display: flex; align-items: center; position: relative; }
.select { color: #333a45; }
.select select { appearance: none; width: 100%; height: 31px; padding: 0 0 2px 9px; }
.select svg { position: absolute; right: 8px; color: #c2c2c6; pointer-events: none; }
.source { width: 202px; margin-right: 3px; }
.sort { width: 167px; }
.type { width: 133px; }
.search { flex: 1; padding: 0 11px; gap: 3px; color: #475467; }
.search input { flex: 1; height: 31px; padding-bottom: 2px; }
.search input::placeholder { color: #667085; opacity: 1; }
.views { width: 80px; display: flex; border: 1px solid #d0d5dd; border-radius: 7px; overflow: hidden; }
.views button { flex: 1; color: #344054; }
.views .on { background: #f1f3f7; border-right: 1px solid #d0d5dd; }
.scroll { flex: 1; min-height: 0; display: flex; }
.content { flex: 1; min-width: 0; overflow: hidden; padding-top: 8px; }
h2 { display: flex; align-items: center; gap: 3px; font-size: 12px; line-height: 16px; color: #475467; }
.content h2 { margin-bottom: 22px; }
.folder { position: relative; width: 324px; height: 39px; background: #e4e5e9; border-radius: 6px; margin-bottom: 25px; display: flex; align-items: center; padding: 0 10px 2px 12px; gap: 8px; font-weight: 500; color: #000; box-shadow: 0 1px 2px rgba(16, 24, 40, 0.06); }
.folder > svg { color: #475467; }
.folder > span { flex: 1; }
.folder .icon-only { color: #000; }
.tooltip { position: absolute; left: 0; top: -29px; padding: 0 11px; border-radius: 5px; background: #101828; color: #fff; font: 400 12px/32px Roboto, sans-serif; white-space: nowrap; box-shadow: 0 4px 8px rgba(16, 24, 40, 0.12); }
.tooltip::after { content: ""; position: absolute; left: 50%; top: 100%; margin-left: -5px; border: 5px solid transparent; border-top-color: #101828; border-bottom: 0; }
.cards { display: grid; grid-template-columns: repeat(5, 1fr); gap: 21px 20px; padding: 0 22px 0 1px; margin-top: -3px; }
.card { aspect-ratio: 1; border-radius: 6px; display: flex; align-items: center; justify-content: center; position: relative; background: linear-gradient(#ebecf0 25%, #cdced3 35%, #98989a 51%, #6c6c6f 65%, #4a4b4b 80%, #383838 90%, #222 100%); }
.pdf { width: 41px; height: 41px; border-radius: 8px; display: grid; place-items: center; font-weight: 600; font-size: 12px; color: #424858; background: linear-gradient(#c9a1a6, #a8878a); position: relative; margin-bottom: 6px; }
.pdf i { position: absolute; left: 14px; bottom: -5px; width: 14px; height: 14px; border-radius: 50%; background: #b3b3b1; color: #6468a8; display: grid; place-items: center; }
h3 { position: absolute; left: 7px; bottom: 12px; color: #fff; font-size: 9px; line-height: 14px; font-weight: 800; }
.track { width: 19px; background: #fcfcfc; color: #8b8b8b; display: flex; flex-direction: column; align-items: center; padding-top: 6px; gap: 7px; }
.thumb { width: 11px; height: 100px; border-radius: 6px; background: #8b8b8b; }
.uploads { position: absolute; right: 37px; bottom: 27px; width: 320px; height: 283px; border-radius: 4px; background: #fff; overflow: hidden; display: flex; flex-direction: column; box-shadow: 0 8px 16px rgba(16, 24, 40, 0.16); }
.uploads header { height: 33px; background: #ebecf0; display: flex; align-items: center; padding: 0 12px 1px 14px; gap: 10px; }
.uploads header h2 { flex: 1; color: #344054; }
.upload-body { flex: 1; display: flex; }
.upload-list { flex: 1; padding: 6px 13px 0 14px; }
.upload-row { height: 23px; border-bottom: 1px solid #e2e4e8; display: flex; align-items: center; gap: 6px; color: #344054; font-size: 10px; font-weight: 500; }
.upload-row span { flex: 1; }
.turn { transform: rotate(-90deg); }
.ok { color: #34b23f; }
.uploads .track { justify-content: space-between; padding: 6px 0 5px; }

/* Desktop taskbar */
.taskbar { flex: none; height: 60px; border-top: 1px solid #b3a9b8; background: linear-gradient(90deg, #e6d9ea, #e4d5ee 10%, #e4d6ec 60%, #e2d7e8); display: flex; align-items: center; padding: 0 24px 0 392px; font-family: "Open Sans", sans-serif; color: #1b1b1f; }
.start-area { display: flex; align-items: center; gap: 16px; }
.task-search { width: 273px; height: 39px; border: 1px solid #d6c5dd; border-bottom-color: #b8a6c0; border-radius: 20px; background: #f8f2fa; display: flex; align-items: center; gap: 11px; padding: 0 13px; font-size: 16px; }
.task-search input { flex: 1; }
.task-search input::placeholder { color: #5b565e; opacity: 1; }
.apps { display: flex; margin-left: 5px; }
.apps button { width: 55px; height: 58px; position: relative; }
.run::after { content: ""; position: absolute; bottom: 5px; left: 24px; width: 8px; height: 4px; border-radius: 2px; background: #857d8a; }
.focused { background: linear-gradient(#f2eaf6, #f2eaf6) center / 48px 48px no-repeat; }
.focused::after { left: 18px; width: 20px; background: #0a78d4; }
.badge { position: absolute; right: 5px; top: 7px; width: 20px; height: 20px; border-radius: 50%; background: #2b2a2e; color: #fff; font-size: 14px; line-height: 20px; text-align: center; display: grid; place-items: center; }
.pale { background: #fff; border: 1px solid #cbbdd0; }
.lime { background: #eefbd5; border: 1px solid #c7cdb5; }
.tray { margin-left: auto; display: flex; align-items: center; }
.tray button { width: 30px; }
.tray .mic { width: 50px; color: #1b57ae; }
.clock { font-size: 14px; line-height: 20px; text-align: right; width: 85px; padding-bottom: 2px; }
```
